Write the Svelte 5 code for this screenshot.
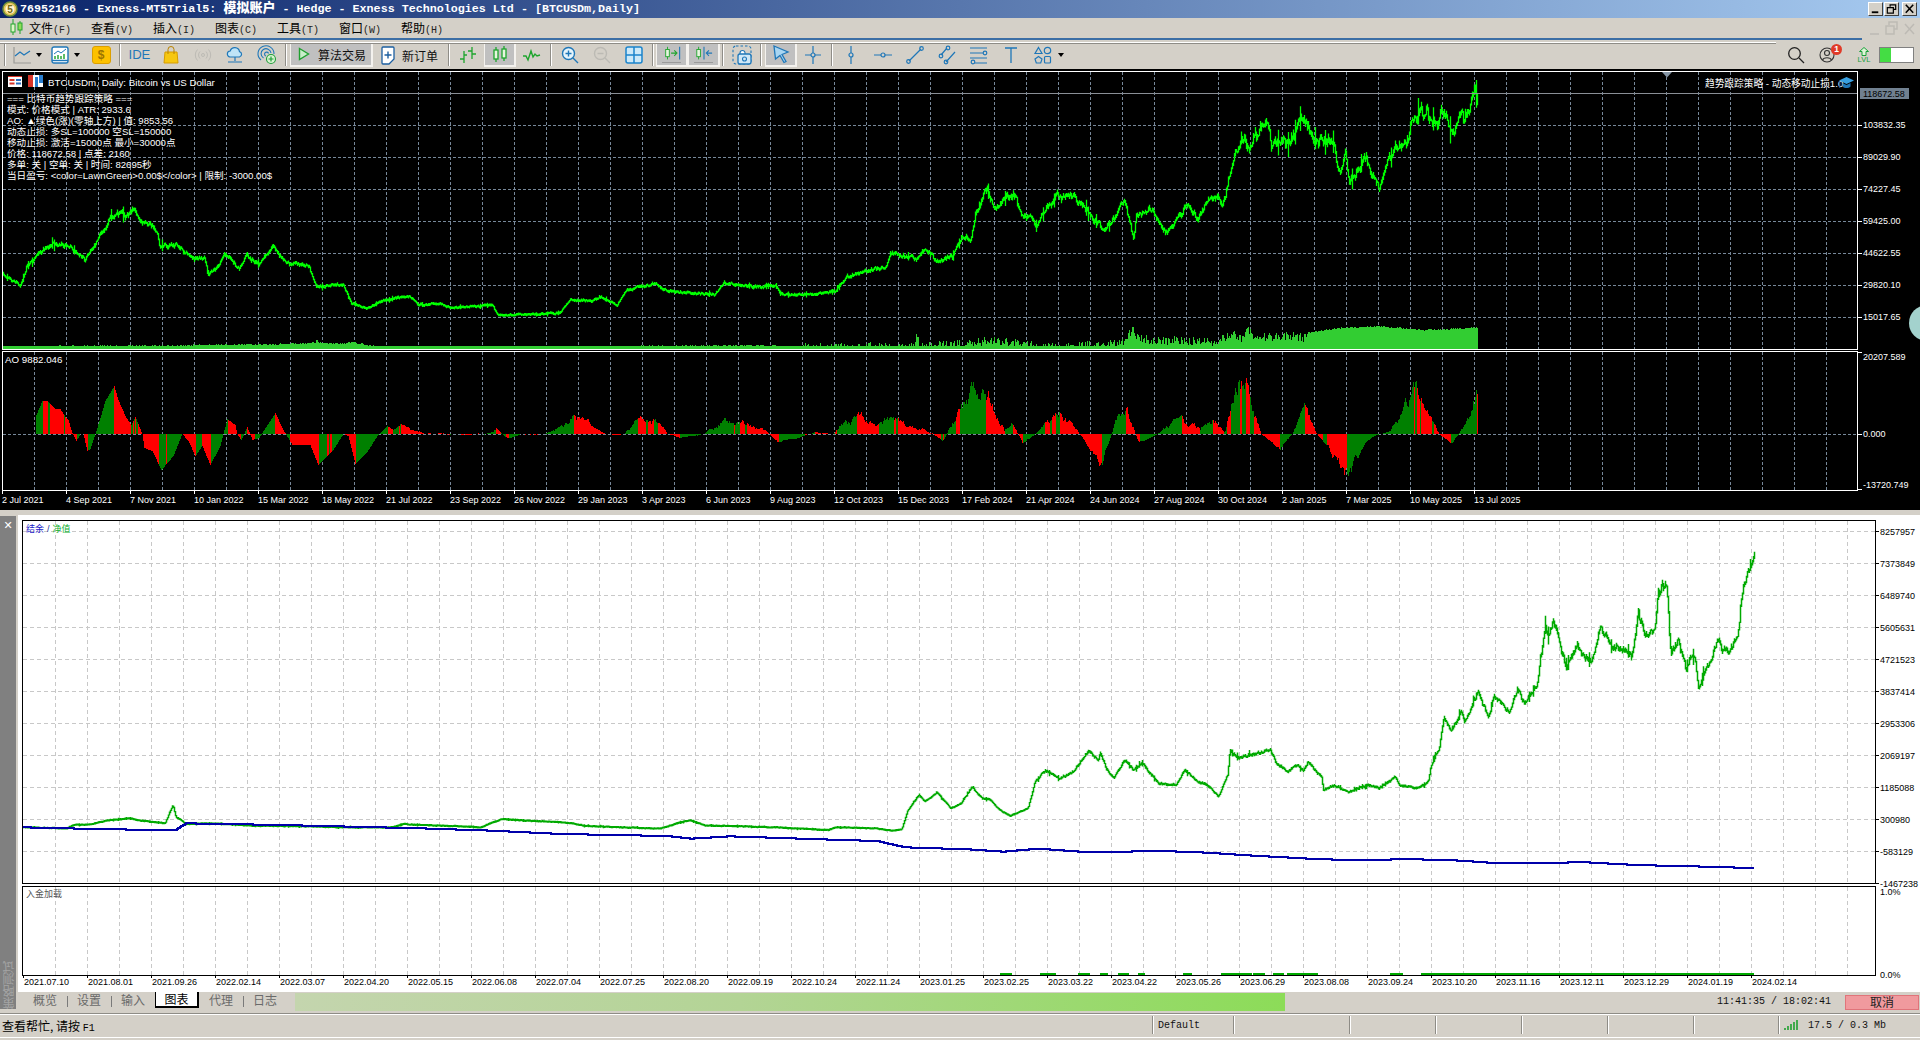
<script>
function rng(seed) {
  let s = seed;
  return () => {
    s |= 0; s = (s + 0x6d2b79f5) | 0;
    let t = Math.imul(s ^ (s >>> 15), 1 | s);
    t = (t + Math.imul(t ^ (t >>> 7), 61 | t)) ^ t;
    return ((t ^ (t >>> 14)) >>> 0) / 4294967296;
  };
}
function interp(pts, x) {
  if (x <= pts[0][0]) return pts[0][1];
  for (let i = 1; i < pts.length; i++) {
    if (x <= pts[i][0]) {
      const [a, b] = pts[i - 1], [c, d] = pts[i];
      return b + ((d - b) * (x - a)) / (c - a || 1);
    }
  }
  return pts[pts.length - 1][1];
}
const z9 = (p) => p.map(([x, y]) => [x / 2.01, 180 + y / 3]);
const z10 = (p) => p.map(([x, y]) => [780 + x / 2.178, 70 + y / 3]);
const z11 = (p) => p.map(([x, y]) => [1100 + x / 2.24, 540 + y / 3]);
const z12 = (p) => p.map(([x, y]) => [x / 1.4255, 740 + y / 3]);

const pricePts = [
  ...z9([[5,285],[40,315],[55,255],[80,220],[105,190],[135,190],[150,215],[170,240],[190,195],[215,130],[230,105],[260,105],[268,70],[285,125],[315,150],[320,195],[355,190],[385,235],[410,235],[418,285],[440,255],[450,220],[480,265],[495,225],[520,255],[548,200],[575,250],[620,260],[635,320],[690,315],[705,370],[735,385],[775,360],[825,350],[840,375],[880,370],[905,385],[990,375],[1000,405],[1125,400],[1145,360],[1190,365],[1205,350],[1240,375],[1260,330],[1315,310],[1335,330],[1365,335],[1435,345],[1455,310],[1520,320],[1560,320]]),
  ...z10([[0,672],[50,675],[120,665],[145,618],[180,605],[230,590],[240,552],[300,565],[315,535],[345,580],[375,560],[395,500],[415,510],[425,430],[450,365],[470,430],[490,380],[510,375],[525,430],[560,460],[600,380],[640,380],[680,440],[705,485],[750,395],[770,510],[775,440],[810,420],[840,490],[885,410],[910,450],[925,400],[950,380],[965,400],[975,340],[985,270],[1005,200],[1020,245],[1060,140],[1070,230],[1110,220],[1135,130],[1165,210],[1205,215],[1220,320],[1230,240],[1240,335],[1275,270],[1305,350],[1335,230],[1365,215],[1375,160],[1405,120],[1430,180],[1440,125],[1465,195],[1475,140],[1500,140],[1515,45],[1518,90]])
];
function wicks(pts, from, to, seed, ampFn, minH) {
  const r = rng(seed);
  let d = '', fast = 0, mid = 0, prev = null;
  for (let x = from; x <= to; x++) {
    const y = interp(pts, x), a = ampFn(y);
    fast = 0.3 * fast + (r() - 0.5) * 2.2;
    mid = 0.8 * mid + (r() - 0.5) * 0.9;
    const c = y + (fast + mid) * a;
    let h = (minH + r() * a * 1.6) / 2;
    if (r() > 0.95) h += a * 2.2;
    let y1 = c - h, y2 = c + h;
    if (prev !== null) { y1 = Math.min(y1, prev); y2 = Math.max(y2, prev); }
    prev = c;
    d += `M${x + 0.5} ${y1.toFixed(1)}V${y2.toFixed(1)}`;
  }
  return d;
}
const pricePath = wicks(pricePts, 3, 1477, 7, (y) => 0.25 + Math.pow(Math.max(0, 340 - y) / 100, 1.4) * 1.5, 2.2);

const volPts = [[3,346],[40,345.5],[100,345],[150,345],[205,344],[240,344],[300,343],[315,342],[316.5,338],[318,342],[345,343],[351,341],[365,344],[380,346],[540,346],[680,345],[760,344.5],[780,345.5],
  ...z10([[0,827],[290,825],[298,790],[303,822],[420,815],[460,805],[560,825],[700,822],[750,812],[768,765],[775,795],[800,805],[950,810],[985,790],[1005,800],[1018,770],[1030,795],[1130,795],[1147,800],[1148,785],[1220,772],[1300,766],[1400,778],[1500,772],[1520,770]])];
const volPath = (() => {
  const r = rng(21); let d = '';
  for (let x = 3; x <= 1477; x++) {
    const noise = x > 800 && x < 1307 ? r() * 9 - 3 : x >= 1307 ? r() * 1.5 : r() * 1.5;
    const t = interp(volPts, x) + noise;
    d += `M${x + 0.5} 349V${Math.min(t, 346).toFixed(1)}`;
  }
  return d;
})();

const aoA = [[35,0],[35.5,18],[42,33],[47,33],[55,25],[60,25],[63,20],[67,15],[68,14],[72,1],[76,-7],[80,0],[83,0],[87,-17],[90,-15],[95,0],[100,16],[105,33],[114,48],[118,34],[125,18],[131,9],[135,17],[142,0],[144,-14],[152,-17],[161,-36],[173,-22],[182,0],[188,-7],[195,-22],[202,-12],[210,-31],[220,-12],[223,0],[227,15],[235,9],[237,0],[241,-6],[247,7],[252,-6],[259,-4],[263,3],[275,21],[283,4],[292,-11],[300,-11],[310,-11],[318,-31],[333,-16],[343,0],[348,-2],[355,-30],[367,-18],[377,-2],[387,8],[393,4],[400,9]];
const aoB = [[335,352],[345,352],[365,354],[395,354],[405,350],[415,358],[425,354],[445,354],[455,350],[468,340],[480,345],[495,354],[510,354],[520,342],[535,345],[545,354],[555,357],[575,354],[590,345],[610,344],[625,352],[635,360],[650,358],[665,352],[680,354],[690,342],[700,338],[715,348],[730,338],[745,348],[760,352],[770,360],[785,330],[805,313],[820,350],[827,344],[835,362],[848,352],[865,338],[880,352],[900,378],[912,340],[920,335],[930,362],[945,354],[965,340],[980,350],[990,340],[1000,354],[1012,298],[1030,354],[1045,366],[1055,354],[1065,335],[1075,354],[1085,365],[1100,388],[1115,360],[1125,354],[1135,352],[1155,318],[1175,354],[1185,362],[1195,348],[1205,322]].map(([x, y]) => [x * 1.2245, (354 - y) * 1.2245]);
const aoPts = [...aoA, ...aoB];
const ao = (() => {
  const r = rng(5); let red = '', green = '', w = 0, flip = 0;
  for (let x = 35; x <= 1477; x++) {
    w = 0.82 * w + (r() - 0.5) * 0.34;
    const base = interp(aoPts, x);
    const h = x < 400 ? base : base * (1 + w) + w * 3;
    let rising = interp(aoPts, x + 1) - interp(aoPts, x - 1) > 0;
    if (flip > 0) flip--;
    else if (r() > 0.975) flip = 1 + Math.floor(r() * 5);
    if (flip > 0) rising = !rising;
    const seg = `M${x + 0.5} 434V${(434 - h).toFixed(1)}`;
    if (rising) green += seg; else red += seg;
  }
  return { red, green };
})();

const eqPts = [
  ...z12([[33,262],[95,265],[105,255],[130,253],[150,242],[185,235],[200,242],[235,250],[246,195],[250,230],[258,240],[265,252],[300,250],[360,257],[410,258],[490,262],[560,262],[575,253],[670,260],[685,262],[715,237],[760,243],[805,247],[835,258],[900,263],[940,266],[965,250],[983,240],[1005,257],[1040,258],[1105,262],[1180,270],[1190,262],[1250,265],[1270,272],[1285,268],[1293,215],[1310,165],[1318,185],[1335,157],[1355,205],[1370,190],[1385,140],[1400,175],[1412,180],[1425,210],[1440,228],[1465,205],[1475,125],[1490,90],[1510,115],[1530,95],[1550,35],[1565,60]]),
  ...z11([[0,640],[10,675],[30,715],[55,660],[75,690],[95,670],[130,730],[170,735],[190,690],[215,725],[240,735],[265,770],[285,705],[290,630],[310,655],[380,630],[395,670],[420,695],[440,675],[455,690],[465,665],[495,710],[500,750],[525,735],[555,755],[600,735],[625,745],[660,710],[670,735],[710,745],[735,725],[740,680],[760,620],[770,530],[785,570],[810,515],[815,550],[845,460],[870,530],[880,470],[915,515],[935,450],[950,490],[980,430],[985,360],[990,320],[997,245],[1005,295],[1015,240],[1030,320],[1045,385],[1068,300],[1080,345],[1100,370],[1120,265],[1140,305],[1190,345],[1205,215],[1220,290],[1240,270],[1250,160],[1268,130],[1278,350],[1295,305],[1312,380],[1330,345],[1340,440],[1365,365],[1380,300],[1410,340],[1430,270],[1435,170],[1450,90],[1465,60]])
];
const eqPath = wicks(eqPts, 23, 1754, 13, (y) => Math.max(0.2, (830 - y) * 0.014), 2);
const bluePts = [
  ...z12([[33,262],[155,268],[250,270],[265,250],[400,255],[600,265],[700,272],[800,282],[950,288],[985,296],[1040,289],[1200,300],[1250,303],[1290,322],[1380,328],[1430,335],[1480,326],[1540,335],[1565,336]]),
  ...z11([[0,936],[140,933],[240,938],[330,946],[495,958],[640,961],[660,956],[810,962],[870,968],[1000,970],[1075,966],[1200,975],[1260,977],[1390,981],[1465,985]])
];
const bluePath = (() => {
  let d = 'M23 ' + Math.round(interp(bluePts, 23));
  for (let x = 24; x <= 1754; x++) d += `H${x}V${Math.round(interp(bluePts, x))}`;
  return d;
})();

const loadSegs = [[1000,1012],[1040,1056],[1078,1090],[1100,1108],[1118,1129],[1138,1145],[1183,1192],[1221,1252],[1253,1265],[1273,1284],[1287,1318],[1390,1403],[1421,1754]];

const gx = Array.from({ length: 57 }, (_, i) => 34 + 32 * i);
const gy = [93, 125, 157, 189, 221, 253, 285, 317];
const priceLabels = [['103832.35',125],['89029.90',157],['74227.45',189],['59425.00',221],['44622.55',253],['29820.10',285],['15017.65',317]];
const aoLabels = [['20207.589',356.5,352.5],['0.000',433.5,434.5],['-13720.749',484.7,489.5]];
const times = ['2 Jul 2021','4 Sep 2021','7 Nov 2021','10 Jan 2022','15 Mar 2022','18 May 2022','21 Jul 2022','23 Sep 2022','26 Nov 2022','29 Jan 2023','3 Apr 2023','6 Jun 2023','9 Aug 2023','12 Oct 2023','15 Dec 2023','17 Feb 2024','21 Apr 2024','24 Jun 2024','27 Aug 2024','30 Oct 2024','2 Jan 2025','7 Mar 2025','10 May 2025','13 Jul 2025'];
const comments = ['=== 比特币趋势跟踪策略 ===','模式: 价格模式 | ATR: 2933.6','AO: ▲绿色(涨)(零轴上方) | 值: 9853.56','动态止损: 多SL=100000 空SL=150000','移动止损: 激活=15000点 最小=30000点','价格: 118672.58 | 点差: 2160','多单: 关 | 空单: 关 | 时间: 82695秒','当日盈亏: <color=LawnGreen>0.00$</color> | 限制: -3000.00$'];

const ex = Array.from({ length: 57 }, (_, i) => 55 + 32 * i).filter((x) => x < 1875);
const ey = Array.from({ length: 12 }, (_, i) => 531 + 32 * i);
const eLabels = ['8257957','7373849','6489740','5605631','4721523','3837414','2953306','2069197','1185088','300980','-583129','-1467238'];
const eDates = ['2021.07.10','2021.08.01','2021.09.26','2022.02.14','2022.03.07','2022.04.20','2022.05.15','2022.06.08','2022.07.04','2022.07.25','2022.08.20','2022.09.19','2022.10.24','2022.11.24','2023.01.25','2023.02.25','2023.03.22','2023.04.22','2023.05.26','2023.06.29','2023.08.08','2023.09.24','2023.10.20','2023.11.16','2023.12.11','2023.12.29','2024.01.19','2024.02.14'];
const menus = [['文件','(F)'],['查看','(V)'],['插入','(I)'],['图表','(C)'],['工具','(T)'],['窗口','(W)'],['帮助','(H)']];
</script>

<div class="app">
  <header class="title">
    <svg class="logo" viewBox="0 0 16 18" width="16" height="18">
      <circle cx="8" cy="9" r="7" fill="#e8c65a" stroke="#6f8f3a" stroke-width="1.5"/>
      <circle cx="8" cy="9" r="4.6" fill="#fff6d0"/>
      <text x="8" y="13" class="logo5">5</text>
    </svg>
    <span class="ttext">76952166 - Exness-MT5Trial5: <b>模拟账户</b> - Hedge - Exness Technologies Ltd - [BTCUSDm,Daily]</span>
    <div class="wbtns">
      <button class="wb" aria-label="最小化"><svg viewBox="0 0 14 12" width="14" height="12"><path d="M3 9.5h7" stroke="#000" stroke-width="2"/></svg></button>
      <button class="wb" aria-label="还原"><svg viewBox="0 0 14 12" width="14" height="12"><path d="M5.5 3.5V1.5h6v5h-2M2.5 4.5h6.500v6h-6.500z" fill="none" stroke="#000" stroke-width="1.300"/></svg></button>
      <button class="wb close" aria-label="关闭"><svg viewBox="0 0 14 12" width="14" height="12"><path d="M3 1.500l8 8.500M11 1.500l-8 8.500" stroke="#000" stroke-width="1.700"/></svg></button>
    </div>
  </header>

  <nav class="menu">
    <svg class="mico" viewBox="0 0 14 18" width="14" height="18">
      <path d="M4 1v16M11 3v13" stroke="#22a52c"/>
      <rect x="2" y="6" width="4" height="8" fill="#dff5c8" stroke="#22a52c"/>
      <rect x="9" y="5" width="4" height="7" fill="#8fdc5a" stroke="#22a52c"/>
    </svg>
    {#each menus as m}
      <span class="mi">{m[0]}<span class="mk">{m[1]}</span></span>
    {/each}
    <svg class="mwin" viewBox="0 0 50 17" width="50" height="17">
      <path d="M2 14h9" stroke="#bdbab4" stroke-width="1.500"/>
      <path d="M21 5V2h8v7h-3M18 6h8v8h-8z" fill="none" stroke="#bdbab4" stroke-width="1.500"/>
      <path d="M37 4l9 10M46 4l-9 10" stroke="#bdbab4" stroke-width="1.500"/>
    </svg>
  </nav>
  <div class="blueline"></div>
  <div class="rule"></div>

  <div class="toolbar">
    <i class="sep first"></i>
    <span class="cell dd1">
      <svg class="ic" viewBox="0 0 18 18"><path d="M1 1v16h17" fill="none" stroke="#9a9a96" stroke-width="1.200"/><path d="M2 10l5-4 4 3 6-4" fill="none" stroke="#1f77b8" stroke-width="1.300"/></svg>
      <em class="caret"></em>
    </span>
    <span class="cell dd2">
      <svg class="ic" viewBox="0 0 18 18"><rect x="1" y="1" width="16" height="16" rx="2" fill="#fff" stroke="#1f77b8" stroke-width="1.400"/><path d="M1 14.500h16" stroke="#1f77b8" stroke-width="1.400"/><path d="M3 8l4-3 3 2 5-4" fill="none" stroke="#1f77b8"/><path d="M4 13v-3M7 13V9M10 13v-3M13 13V8" stroke="#2aa836" stroke-width="1.500"/></svg>
      <em class="caret"></em>
    </span>
    <span class="cell"><span class="dollar">$</span></span>
    <i class="sep"></i>
    <span class="cell"><span class="ide">IDE</span></span>
    <span class="cell"><svg class="ic" viewBox="0 0 18 18"><path d="M3 6h12l1 11H2z" fill="#f6c711" stroke="#d69c00"/><path d="M6 8V3.500a3 3 0 0 1 6 0V8" fill="none" stroke="#b98300"/></svg></span>
    <span class="cell"><svg class="ic" viewBox="0 0 18 18" fill="none" stroke="#bdbbb5"><circle cx="9" cy="9" r="1.500"/><path d="M6 5.500a5 5 0 0 0 0 7M12 5.500a5 5 0 0 1 0 7M3.500 3.500a8 8 0 0 0 0 11M14.500 3.500a8 8 0 0 1 0 11"/></svg></span>
    <span class="cell"><svg class="ic" viewBox="0 0 18 18"><path d="M4.500 11a3 3 0 0 1-.3-6 4.800 4.800 0 0 1 9.300.6 2.800 2.800 0 0 1 0 5.400z" fill="#bfe4f7" stroke="#1f77b8" stroke-width="1.200"/><path d="M9 11v4M2 16h14" stroke="#1f77b8" stroke-width="1.200"/></svg></span>
    <span class="cell"><svg class="ic" viewBox="0 0 18 18" fill="none" stroke="#1f77b8" stroke-width="1.100"><path d="M3 14A8 8 0 1 1 16 8M5.500 12A5 5 0 1 1 13 7M8 10a2 2 0 1 1 2.500-2.500"/><circle cx="13" cy="13" r="4.500" fill="#d8f3d0" stroke="#1e9e3a"/><path d="M13 10.500v5M10.500 13h5" stroke="#1e9e3a" stroke-width="1.200"/></svg></span>
    <i class="sep"></i>
    <span class="algo on">
      <svg viewBox="0 0 12 14" width="12" height="14"><path d="M1.500 1.500l9 5.500-9 5.500z" fill="#c9eec9" stroke="#20a030" stroke-width="1.400"/></svg>
      <span class="cn">算法交易</span>
    </span>
    <span class="neworder">
      <svg viewBox="0 0 14 19" width="14" height="19"><path d="M2 1h10a1 1 0 0 1 1 1v11l-5 5H2a1 1 0 0 1-1-1V2a1 1 0 0 1 1-1z" fill="#fff" stroke="#1d5fa0" stroke-width="1.300"/><path d="M7 5.500v7M3.500 9h7" stroke="#1d5fa0" stroke-width="1.400"/></svg>
      <span class="cn">新订单</span>
    </span>
    <i class="sep"></i>
    <span class="cell"><svg class="ic" viewBox="0 0 18 18" fill="none" stroke="#1ea52d" stroke-width="1.300"><path d="M5 5v12M1 13h4M5 9h3M13 1v12M9 5h4M13 8h4"/></svg></span>
    <span class="cell on"><svg class="ic" viewBox="0 0 18 18" fill="none" stroke="#1ea52d" stroke-width="1.300"><path d="M5 2v3M5 14v3M13 1v3M13 13v3"/><rect x="3" y="5" width="4" height="9" fill="#e8f5e0"/><rect x="11" y="4" width="4" height="9" fill="#e8f5e0"/></svg></span>
    <span class="cell"><svg class="ic" viewBox="0 0 18 18"><path d="M0 10h3l2 4 3-9 2 6 2-3 2 2 3-1" fill="none" stroke="#1ea52d" stroke-width="1.400"/></svg></span>
    <i class="sep"></i>
    <span class="cell"><svg class="ic" viewBox="0 0 18 18" fill="none" stroke="#1f77b8" stroke-width="1.400"><circle cx="7.500" cy="7.500" r="6" fill="#e6f4fb"/><path d="M12 12l5 5M7.500 4.500v6M4.500 7.500h6"/></svg></span>
    <span class="cell"><svg class="ic" viewBox="0 0 18 18" fill="none" stroke="#bcbab4" stroke-width="1.400"><circle cx="7.500" cy="7.500" r="6"/><path d="M12 12l5 5M4.500 7.500h6"/></svg></span>
    <span class="cell"><svg class="ic" viewBox="0 0 18 18"><rect x="1" y="1" width="16" height="16" rx="2" fill="#cde9f8" stroke="#1b84cc" stroke-width="1.500"/><path d="M9 1v16M1 9h16" stroke="#1b84cc" stroke-width="1.500"/></svg></span>
    <i class="sep"></i>
    <span class="cell on under"><svg class="ic" viewBox="0 0 20 18" fill="none"><path d="M5 1v14" stroke="#1ea52d"/><rect x="3" y="4" width="4" height="8" fill="#e8f5e0" stroke="#1ea52d"/><path d="M9 8h6M12.500 5l3 3-3 3" stroke="#1ea52d" stroke-width="1.200"/><path d="M18.500 1v14" stroke="#1f77b8" stroke-width="1.200"/></svg></span>
    <span class="cell on under"><svg class="ic" viewBox="0 0 20 18" fill="none"><path d="M4 1v14" stroke="#1ea52d"/><rect x="2" y="4" width="4" height="8" fill="#e8f5e0" stroke="#1ea52d"/><path d="M10 1v14" stroke="#1f77b8" stroke-width="1.200"/><path d="M19 8h-6M15.500 5l-3 3 3 3" stroke="#1f77b8" stroke-width="1.200"/></svg></span>
    <i class="sep"></i>
    <span class="cell"><svg class="ic big" viewBox="0 0 20 20" fill="none" stroke="#1f77b8" stroke-width="1.100"><rect x="1" y="1" width="18" height="18" rx="3" stroke-dasharray="2.500 2"/><path d="M8 10V8a2 2 0 0 1 5 0v2" fill="#fff"/><rect x="6" y="9" width="13" height="10" rx="2" fill="#cfe8f7" stroke-width="1.300"/><circle cx="12.500" cy="14" r="2"/></svg></span>
    <i class="sep wide"></i>
    <span class="cell on"><svg class="ic" viewBox="0 0 18 18"><path d="M2 1l14 6-6 2.500 4 7-2 1-4-7L3.500 14z" fill="#a9d6f2" stroke="#1f77b8" stroke-width="1.300"/></svg></span>
    <span class="cell"><svg class="ic" viewBox="0 0 18 18" fill="none" stroke="#1f77b8" stroke-width="1.200"><path d="M9 0v7M9 11v7M1 9h6M11 9h6"/><circle cx="9" cy="9" r="2"/></svg></span>
    <i class="sep"></i>
    <span class="cell"><svg class="ic" viewBox="0 0 18 18" fill="none" stroke="#1f77b8" stroke-width="1.200"><path d="M9 0v7M9 11v7"/><circle cx="9" cy="9" r="2"/></svg></span>
    <span class="cell"><svg class="ic" viewBox="0 0 18 18" fill="none" stroke="#1f77b8" stroke-width="1.200"><path d="M0 9h7M11 9h7"/><circle cx="9" cy="9" r="2"/></svg></span>
    <span class="cell"><svg class="ic" viewBox="0 0 18 18" fill="none" stroke="#1f77b8" stroke-width="1.200"><path d="M3 15L15 3"/><circle cx="2.500" cy="15.500" r="1.800"/><circle cx="15.500" cy="2.500" r="1.800"/></svg></span>
    <span class="cell"><svg class="ic" viewBox="0 0 18 18" fill="none" stroke="#1f77b8" stroke-width="1.200"><path d="M3 9l6-7M8 16l9-10"/><circle cx="3" cy="10" r="1.800"/><circle cx="10" cy="2" r="1.800"/><circle cx="8" cy="16" r="1.800"/></svg></span>
    <span class="cell"><svg class="ic" viewBox="0 0 18 18" fill="none" stroke="#1f77b8" stroke-width="1.200"><path d="M0 2h17M0 7h13M0 12h17M5 17h12"/><circle cx="15" cy="7" r="1.800"/><circle cx="3" cy="17" r="1.800" transform="translate(0 -1)"/></svg></span>
    <span class="cell"><svg class="ic" viewBox="0 0 18 18" fill="none" stroke="#1f77b8" stroke-width="1.300"><path d="M3 2h12M9 2v15"/></svg></span>
    <span class="cell last">
      <svg class="ic" viewBox="0 0 18 18" fill="none" stroke="#1f77b8" stroke-width="1.200"><path d="M4.500 1.500L8 7.500H1z"/><circle cx="13.500" cy="4.500" r="3.200"/><path d="M4.500 10.500l3.500 2.500-1.300 4H2.300L1 13z"/><rect x="10.500" y="10.500" width="6" height="6.500" rx="1"/></svg>
    </span>
    <em class="caret lastc"></em>

    <div class="tright">
      <span class="cell"><svg class="ic" viewBox="0 0 18 18" fill="none" stroke="#222" stroke-width="1.300"><circle cx="7.500" cy="7.500" r="5.800"/><path d="M12 12l5 5"/></svg></span>
      <span class="cell user">
        <svg class="ic" viewBox="0 0 18 18" fill="none" stroke="#333" stroke-width="1.100"><circle cx="8" cy="9" r="7"/><circle cx="8" cy="7" r="2.500"/><path d="M3.500 14c1-3 8-3 9 0"/></svg>
        <span class="badge">1</span>
      </span>
      <span class="lvl">
        <svg viewBox="0 0 12 9" width="12" height="9"><path d="M6 .5l4.500 4H8V8.500H4V4.500H1.500z" fill="#dff5d8" stroke="#19a03a"/></svg>
        <span>LVL</span>
      </span>
      <span class="toggle"><i></i></span>
    </div>
  </div>

  <svg class="price" width="1920" height="441" viewBox="0 69 1920 441">
    <g class="grid">
      {#each gx as x}<path d="M{x + 0.5} 72V349M{x + 0.5} 352V490"/>{/each}
      {#each gy as y}<path d="M3 {y + 0.5}H1858"/>{/each}
      <path d="M3 434.500H1858"/>
    </g>
    <path d={volPath} class="vol"/>
    <path d={pricePath} class="pl"/>
    <path d={ao.red} class="aor"/>
    <path d={ao.green} class="aog"/>
    <path d="M3 93.500H1858" class="bid"/>
    <path d="M1662 72h10l-5 5.500z" fill="#8595a5"/>
    <rect x="2.500" y="71.500" width="1855" height="278" class="frame"/>
    <rect x="2.500" y="351.500" width="1855" height="139" class="frame"/>

    <g transform="translate(8 76)">
      <rect width="14" height="11" fill="#fff"/>
      <path d="M0 .5h14" stroke="#d8352a"/>
      <path d="M1.500 3h5v2h-5zM1.500 6.500h5v2h-5z" fill="#d8352a"/>
      <path d="M8 3h5v2H8zM8 6.500h5v2H8z" fill="#2a6fc0"/>
    </g>
    <g transform="translate(28 75)">
      <rect width="15" height="12" fill="#fff"/>
      <path d="M0 0h5v12H0z" fill="#d8352a"/>
      <path d="M7 2h3v10H7zM11 0h4v8h-4z" fill="#2a7fd0"/>
    </g>
    <text x="48" y="86" class="ax hd">BTCUSDm, Daily: Bitcoin vs US Dollar</text>
    {#each comments as c, i}<text x="7" y={102 + i * 11} class="ax cm">{c}</text>{/each}
    <text x="1705" y="87" class="ax cm top">趋势跟踪策略 - 动态移动止损1.0</text>
    <g transform="translate(1839 77)">
      <path d="M7.500 0L15 3.500 7.500 7 0 3.500z" fill="#39a0e0"/>
      <path d="M3.500 6v3.500c2 2 6 2 8 0V6L7.500 8z" fill="#1f77b8"/>
      <path d="M.8 4v7" stroke="#1f5f9f"/>
    </g>
    <text x="5" y="363" class="ax hd">AO 9882.046</text>

    <rect x="1860" y="88" width="49" height="11" fill="#708090"/>
    <text x="1863" y="97" class="ax blk">118672.58</text>
    {#each priceLabels as l}
      <path d="M1858 {l[1] + 0.5}h4" stroke="#fff"/>
      <text x="1863" y={l[1] + 3} class="ax">{l[0]}</text>
    {/each}
    {#each aoLabels as l}
      <path d="M1858 {l[2]}h4" stroke="#fff"/>
      <text x="1863" y={l[1] + 3.200} class="ax">{l[0]}</text>
    {/each}
    {#each times as t, i}
      <path d="M{2.5 + i * 64} 490v4" stroke="#fff"/>
      <text x={2 + i * 64} y="503" class="ax">{t}</text>
    {/each}
    <circle cx="1927" cy="323" r="18" fill="#a3d2cd"/>
  </svg>

  <div class="band"></div>

  <section class="tester">
    <aside class="strip">
      <span class="x">✕</span>
      <span class="vtxt">策略测试</span>
    </aside>
    <div class="tmain">
      <svg class="eq" width="1902" height="477" viewBox="18 515 1902 477">
        <rect x="18" y="515" width="1902" height="477" fill="#fff"/>
        <g class="egrid">
          {#each ex as x}<path d="M{x + 0.5} 521V883M{x + 0.5} 887V975"/>{/each}
          {#each ey as y}<path d="M23 {y + 0.5}H1875"/>{/each}
        </g>
        <path d={eqPath} class="eg"/>
        <path d={bluePath} class="eb"/>
        {#each loadSegs as s}<path d="M{s[0]} 974H{s[1]}" class="load"/>{/each}
        <rect x="22.500" y="520.500" width="1853" height="363" class="eframe"/>
        <rect x="22.500" y="886.500" width="1853" height="89" class="eframe"/>
        <text x="26" y="532" class="et leg"><tspan fill="#2020c8">结余</tspan><tspan dx="3" fill="#1030a0">/</tspan><tspan dx="3" fill="#10b030">净值</tspan></text>
        <text x="26" y="897" class="et leg">入金加载</text>
        {#each eLabels as l, i}
          <path d="M1876 {ey[i] + 0.5}h3" stroke="#000"/>
          <text x="1880" y={ey[i] + 4} class="et">{l}</text>
        {/each}
        <text x="1880" y="895" class="et">1.0%</text>
        <text x="1880" y="978" class="et">0.0%</text>
        {#each eDates as d, i}
          <path d="M{23.5 + i * 64} 975v3" stroke="#000"/>
          <text x={24 + i * 64} y="985" class="et">{d}</text>
        {/each}
      </svg>
      <div class="tabs">
        <span class="tab">概览</span><i class="tsep"></i>
        <span class="tab">设置</span><i class="tsep"></i>
        <span class="tab">输入</span>
        <span class="tab active">图表</span>
        <span class="tab after">代理</span><i class="tsep"></i>
        <span class="tab">日志</span>
        <div class="progress"></div>
        <span class="time">11:41:35 / 18:02:41</span>
        <span class="cancel">取消</span>
      </div>
    </div>
  </section>

  <footer class="status">
    <span class="s0">查看帮忙, 请按 <span class="mono">F1</span></span>
    <span class="c mono w81">Default</span>
    <span class="c w116"></span>
    <span class="c w86"></span>
    <span class="c w86"></span>
    <span class="c w86"></span>
    <span class="c w86"></span>
    <span class="c w85"></span>
    <span class="c net mono">
      <svg viewBox="0 0 14 12" width="14" height="12"><path d="M1 11v-2M4 11V7M7 11V5M10 11V3M13 11V1" stroke="#20a030" stroke-width="1.600"/></svg>
      17.5 / 0.3 Mb
    </span>
  </footer>
</div>

<style>
  :global(body) { margin: 0; background: #d4d0c8; }
  .app { width: 1920px; height: 1040px; overflow: hidden; display: flex; flex-direction: column; background: #d4d0c8; font-family: "Liberation Sans", "Noto Sans CJK SC", sans-serif; }

  .title { height: 18px; flex: none; display: flex; align-items: center; background: linear-gradient(90deg, #0a246a, #a6caf0); color: #fff; }
  .logo { margin: 0 2px 0 2px; flex: none; }
  .logo5 { font: bold 10px "Liberation Sans", sans-serif; fill: #7a6a10; text-anchor: middle; }
  .ttext { font: bold 11.7px/16px "Liberation Mono", "Noto Sans CJK SC", monospace; white-space: pre; padding-bottom: 1px; }
  .ttext b { font-size: 13px; }
  .wbtns { margin-left: auto; display: flex; padding-right: 3px; }
  .wb { width: 15px; height: 14px; padding: 0; margin: 0 0 0 1px; display: flex; align-items: center; justify-content: center; background: #d4d0c8; border: 1px solid; border-color: #fff #404040 #404040 #fff; }
  .wb.close { margin-left: 3px; }

  .menu { height: 20px; flex: none; display: flex; align-items: center; padding-left: 9px; padding-bottom: 2px; box-sizing: border-box; position: relative; }
  .mico { width: 14px; margin-right: 6px; flex: none; }
  .mi { width: 62px; flex: none; font: 12px "Noto Sans CJK SC", sans-serif; color: #000; white-space: nowrap; }
  .mk { font: 10px "Liberation Mono", monospace; color: #222; }
  .mwin { position: absolute; right: 2px; top: 2px; }
  .blueline { height: 2px; width: 1862px; flex: none; background: #3c6ea5; }
  .rule { width: 1776px; margin-top: 2px; flex: none; background: #fff; border-bottom: 1px solid #8e8c86; height: 1px; }

  .toolbar { height: 25px; flex: none; display: flex; align-items: center; padding-left: 2px; padding-bottom: 3px; box-sizing: border-box; }
  .sep { width: 2px; height: 22px; margin: 0 2px; background: #8f8d87; border-right: 1px solid #fff; box-sizing: border-box; flex: none; }
  .sep.wide { margin-right: 3px; }
  .cell { width: 32px; height: 23px; flex: none; display: flex; align-items: center; justify-content: center; position: relative; box-sizing: border-box; }
  .cell.dd1 { width: 39px; justify-content: flex-start; padding-left: 5px; gap: 5px; }
  .cell.dd2 { width: 38px; justify-content: flex-start; padding-left: 4px; gap: 5px; }
  .ic { width: 18px; height: 18px; display: block; flex: none; overflow: visible; }
  .ic.big { width: 20px; height: 20px; }
  .caret { width: 0; height: 0; border: 3.500px solid transparent; border-top: 4px solid #000; border-bottom: 0; display: block; flex: none; }
  .lastc { margin-left: -1px; }
  .dollar { width: 17px; height: 16px; border-radius: 3px; background: #fdc100; border: 1px solid #dc9f00; color: #9c7400; font: bold 12px/16px "Liberation Sans", sans-serif; text-align: center; }
  .ide { font: 12.5px "Liberation Sans", sans-serif; color: #1f77b8; transform: scaleX(1.05); }
  .on { background: #c0c0c0; border-right: 2px solid #f4f2ee; border-bottom: 2px solid #f4f2ee; border-left: 1px solid #f4f2ee; }
  .under::after { content: ""; position: absolute; left: 5px; right: 5px; bottom: 2px; height: 1px; background: #9a9a9a; }
  .algo { width: 83px; height: 23px; margin-left: 1px; flex: none; box-sizing: border-box; display: flex; align-items: center; gap: 8px; padding-left: 7px; }
  .neworder { width: 73px; flex: none; display: flex; align-items: center; gap: 7px; padding-left: 8px; box-sizing: border-box; }
  .cn { font: 12px "Noto Sans CJK SC", sans-serif; color: #111; }

  .tright { margin-left: auto; display: flex; align-items: center; padding-right: 6px; }
  .user { overflow: visible; }
  .badge { position: absolute; left: 19px; top: 0px; width: 11px; height: 11px; border-radius: 50%; background: #e03a28; color: #fff; font: bold 8.5px/11px "Liberation Sans", sans-serif; text-align: center; }
  .lvl { width: 30px; margin-left: 5px; flex: none; display: flex; flex-direction: column; align-items: center; color: #19a03a; font: 7.5px/8px "Liberation Sans", sans-serif; }
  .toggle { width: 35px; height: 16px; box-sizing: border-box; border: 1px solid #808080; background: #fff; display: block; }
  .toggle i { display: block; width: 11px; height: 100%; background: #44dd44; }

  .price { display: block; flex: none; background: #000; }
  .grid path { stroke: #778899; stroke-dasharray: 3 2; fill: none; shape-rendering: crispEdges; }
  .vol { stroke: #32cd32; fill: none; shape-rendering: crispEdges; }
  .pl { stroke: #00ff00; fill: none; stroke-width: 1.300; }
  .aor { stroke: #ff0000; fill: none; shape-rendering: crispEdges; }
  .aog { stroke: #008000; fill: none; shape-rendering: crispEdges; }
  .bid { stroke: #8a8f96; fill: none; shape-rendering: crispEdges; }
  .frame { fill: none; stroke: #fff; shape-rendering: crispEdges; }
  .ax { font: 9px "Liberation Sans", "Noto Sans CJK SC", sans-serif; fill: #fff; }
  .ax.hd { font-size: 9.750px; }
  .ax.cm { font-size: 9.600px; }
  .ax.cm.top { font-size: 9.700px; }
  .ax.blk { fill: #000; }

  .band { height: 5px; flex: none; background: #d4d0c8; }
  .tester { height: 498px; flex: none; display: flex; }
  .strip { width: 16px; height: 493px; margin-right: 2px; margin-top: 1px; flex: none; background: #808080; display: flex; flex-direction: column; justify-content: space-between; align-items: center; }
  .x { color: #fff; font: bold 11px/20px "DejaVu Sans", sans-serif; }
  .vtxt { writing-mode: vertical-rl; transform: rotate(180deg); color: #a4a4a4; font: 12px "Noto Sans CJK SC", sans-serif; }
  .tmain { width: 1902px; display: flex; flex-direction: column; }
  .eq { display: block; flex: none; }
  .egrid path { stroke: #c8c8c8; stroke-dasharray: 4 3; fill: none; shape-rendering: crispEdges; }
  .eg { stroke: #00aa00; fill: none; stroke-width: 1.500; }
  .eb { stroke: #0000aa; fill: none; stroke-width: 2.500; shape-rendering: crispEdges; }
  .load { stroke: #00aa00; stroke-width: 2; shape-rendering: crispEdges; }
  .eframe { fill: none; stroke: #000; shape-rendering: crispEdges; }
  .et { font: 9px "Liberation Sans", "Noto Sans CJK SC", sans-serif; fill: #000; }
  .et.leg { font-size: 9px; fill: #555; }

  .tabs { height: 21px; flex: none; display: flex; align-items: flex-start; padding-left: 15px; box-sizing: border-box; }
  .tab { width: 24px; flex: none; font: 12px/15px "Noto Sans CJK SC", sans-serif; color: #6a6a6a; text-align: center; white-space: nowrap; }
  .tsep { width: 1px; height: 11px; margin: 4px 9px 0 10px; background: #7a7a7a; flex: none; }
  .tab.active { width: 44px; height: 16px; margin-left: 10px; box-sizing: border-box; background: #fff; color: #000; border: 1px solid #000; border-top: 0; border-right-width: 2px; border-bottom-width: 2px; line-height: 14px; }
  .tab.after { margin-left: 10px; }
  .progress { width: 990px; height: 18px; margin: 1px 0 0 18px; flex: none; background: linear-gradient(90deg, #c4d5ae, #b3d495 45%, #8cdc58); }
  .time { margin: 4px 0 0 auto; font: 10px "Liberation Mono", monospace; color: #111; white-space: nowrap; }
  .cancel { width: 74px; height: 15px; margin: 3px 1px 0 14px; flex: none; box-sizing: border-box; background: #f09a9e; border: 1px solid #e0747a; font: 12px/12px "Noto Sans CJK SC", sans-serif; text-align: center; color: #222; }

  .status { flex: none; box-sizing: border-box; border-top: 1px solid #8e8c86; border-bottom: 1px solid #fff; display: flex; align-items: center; height: 25px; box-shadow: inset 0 1px 0 #fff; padding-bottom: 1px; }
  .s0 { width: 1152px; padding-left: 2px; flex: none; font: 12px "Noto Sans CJK SC", sans-serif; color: #000; box-sizing: border-box; }
  .mono { font: 10px "Liberation Mono", monospace; }
  .c { height: 18px; box-sizing: border-box; border-left: 1px solid #8e8c86; box-shadow: inset 1px 0 0 #fff; flex: none; padding-left: 5px; display: flex; align-items: center; color: #111; }
  .w81 { width: 81px; }
  .w116 { width: 116px; }
  .w86 { width: 86px; }
  .w85 { width: 85px; }
  .net { gap: 4px; white-space: pre; }
</style>
